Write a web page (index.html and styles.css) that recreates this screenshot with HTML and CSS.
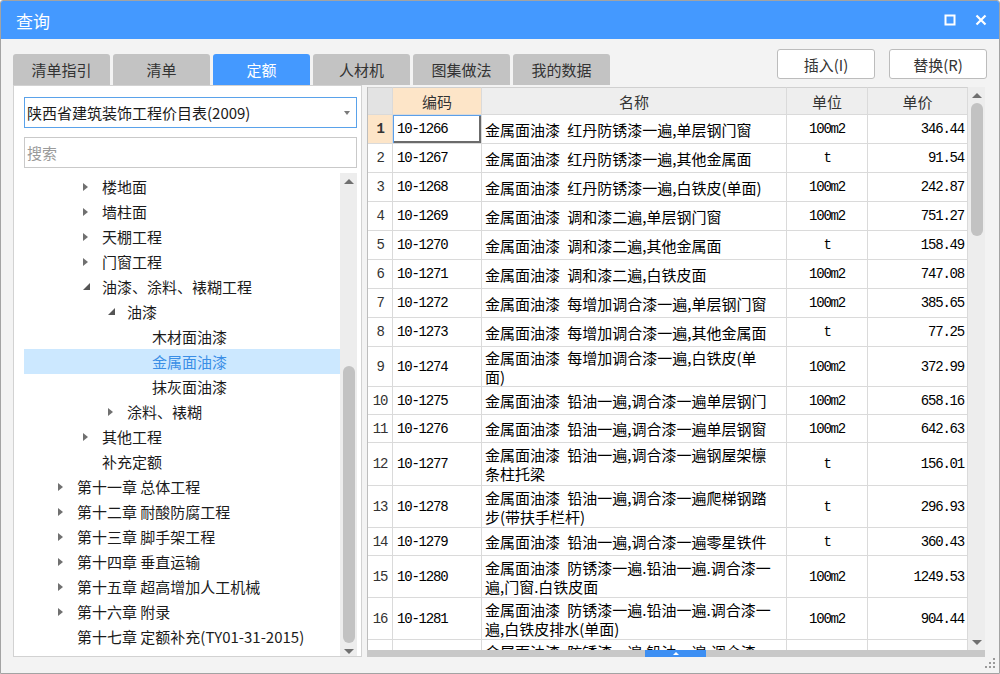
FILE: index.html
```html
<!DOCTYPE html>
<html lang="zh-CN">
<head>
<meta charset="utf-8">
<title>查询</title>
<link rel="stylesheet" href="styles.css">
</head>
<body>
<div class="window">
  <div class="titlebar">
    <span class="title">查询</span>
    <div class="wctrls">
      <svg width="12" height="12" viewBox="0 0 12 12"><rect x="1.5" y="1.5" width="9" height="9" fill="none" stroke="#fff" stroke-width="2"/></svg>
      <svg width="12" height="12" viewBox="0 0 12 12"><path d="M1.5 1.5 L10.5 10.5 M10.5 1.5 L1.5 10.5" stroke="#fff" stroke-width="2.2" fill="none"/></svg>
    </div>
  </div>

  <div class="toolbar">
    <div class="tabs">
      <div class="tab">清单指引</div>
      <div class="tab">清单</div>
      <div class="tab active">定额</div>
      <div class="tab">人材机</div>
      <div class="tab">图集做法</div>
      <div class="tab">我的数据</div>
    </div>
    <div class="btns">
      <div class="btn">插入(I)</div>
      <div class="btn">替换(R)</div>
    </div>
  </div>

  <div class="main">
    <div class="left">
      <div class="combo"><span>陕西省建筑装饰工程价目表(2009)</span><span class="dd"></span></div>
      <div class="search">搜索</div>
      <div class="tree">
        <div class="tree-list">
          <div class="row"><span class="ind2"></span><span class="tw"><i class="ac"></i></span>楼地面</div>
          <div class="row"><span class="ind2"></span><span class="tw"><i class="ac"></i></span>墙柱面</div>
          <div class="row"><span class="ind2"></span><span class="tw"><i class="ac"></i></span>天棚工程</div>
          <div class="row"><span class="ind2"></span><span class="tw"><i class="ac"></i></span>门窗工程</div>
          <div class="row"><span class="ind2"></span><span class="tw"><i class="ae"></i></span>油漆、涂料、裱糊工程</div>
          <div class="row"><span class="ind3"></span><span class="tw"><i class="ae"></i></span>油漆</div>
          <div class="row"><span class="ind4"></span><span class="tw"></span>木材面油漆</div>
          <div class="row sel"><span class="ind4"></span><span class="tw"></span>金属面油漆</div>
          <div class="row"><span class="ind4"></span><span class="tw"></span>抹灰面油漆</div>
          <div class="row"><span class="ind3"></span><span class="tw"><i class="ac"></i></span>涂料、裱糊</div>
          <div class="row"><span class="ind2"></span><span class="tw"><i class="ac"></i></span>其他工程</div>
          <div class="row"><span class="ind2"></span><span class="tw"></span>补充定额</div>
          <div class="row"><span class="ind1"></span><span class="tw"><i class="ac"></i></span>第十一章 总体工程</div>
          <div class="row"><span class="ind1"></span><span class="tw"><i class="ac"></i></span>第十二章 耐酸防腐工程</div>
          <div class="row"><span class="ind1"></span><span class="tw"><i class="ac"></i></span>第十三章 脚手架工程</div>
          <div class="row"><span class="ind1"></span><span class="tw"><i class="ac"></i></span>第十四章 垂直运输</div>
          <div class="row"><span class="ind1"></span><span class="tw"><i class="ac"></i></span>第十五章 超高增加人工机械</div>
          <div class="row"><span class="ind1"></span><span class="tw"><i class="ac"></i></span>第十六章 附录</div>
          <div class="row"><span class="ind1"></span><span class="tw"></span>第十七章 定额补充(TY01-31-2015)</div>
        </div>
        <div class="vscroll">
          <div class="sarrow"><i class="up"></i></div>
          <div class="thumb tthumb"></div>
          <div class="sfill"></div>
          <div class="sarrow"><i class="down"></i></div>
        </div>
      </div>
    </div>

    <div class="right">
      <div class="gridwrap">
        <div class="grid">
          <div class="gh">
            <div class="c cn"></div>
            <div class="c cc">编码</div>
            <div class="c cm">名称</div>
            <div class="c cu">单位</div>
            <div class="c cp">单价</div>
          </div>

          <div class="gr h29"><div class="c cn cur mono">1</div><div class="c cc mono focus">10-1266</div><div class="c cm">金属面油漆 红丹防锈漆一遍,单层钢门窗</div><div class="c cu mono">100m2</div><div class="c cp mono">346.44</div></div>
          <div class="gr h29"><div class="c cn mono">2</div><div class="c cc mono">10-1267</div><div class="c cm">金属面油漆 红丹防锈漆一遍,其他金属面</div><div class="c cu mono">t</div><div class="c cp mono">91.54</div></div>
          <div class="gr h29"><div class="c cn mono">3</div><div class="c cc mono">10-1268</div><div class="c cm">金属面油漆 红丹防锈漆一遍,白铁皮(单面)</div><div class="c cu mono">100m2</div><div class="c cp mono">242.87</div></div>
          <div class="gr h29"><div class="c cn mono">4</div><div class="c cc mono">10-1269</div><div class="c cm">金属面油漆 调和漆二遍,单层钢门窗</div><div class="c cu mono">100m2</div><div class="c cp mono">751.27</div></div>
          <div class="gr h29"><div class="c cn mono">5</div><div class="c cc mono">10-1270</div><div class="c cm">金属面油漆 调和漆二遍,其他金属面</div><div class="c cu mono">t</div><div class="c cp mono">158.49</div></div>
          <div class="gr h29"><div class="c cn mono">6</div><div class="c cc mono">10-1271</div><div class="c cm">金属面油漆 调和漆二遍,白铁皮面</div><div class="c cu mono">100m2</div><div class="c cp mono">747.08</div></div>
          <div class="gr h29"><div class="c cn mono">7</div><div class="c cc mono">10-1272</div><div class="c cm">金属面油漆 每增加调合漆一遍,单层钢门窗</div><div class="c cu mono">100m2</div><div class="c cp mono">385.65</div></div>
          <div class="gr h29"><div class="c cn mono">8</div><div class="c cc mono">10-1273</div><div class="c cm">金属面油漆 每增加调合漆一遍,其他金属面</div><div class="c cu mono">t</div><div class="c cp mono">77.25</div></div>
          <div class="gr h40"><div class="c cn mono">9</div><div class="c cc mono">10-1274</div><div class="c cm">金属面油漆 每增加调合漆一遍,白铁皮(单<br>面)</div><div class="c cu mono">100m2</div><div class="c cp mono">372.99</div></div>
          <div class="gr h28"><div class="c cn mono">10</div><div class="c cc mono">10-1275</div><div class="c cm">金属面油漆 铅油一遍,调合漆一遍单层钢门</div><div class="c cu mono">100m2</div><div class="c cp mono">658.16</div></div>
          <div class="gr h28"><div class="c cn mono">11</div><div class="c cc mono">10-1276</div><div class="c cm">金属面油漆 铅油一遍,调合漆一遍单层钢窗</div><div class="c cu mono">100m2</div><div class="c cp mono">642.63</div></div>
          <div class="gr h43"><div class="c cn mono">12</div><div class="c cc mono">10-1277</div><div class="c cm">金属面油漆 铅油一遍,调合漆一遍钢屋架檩<br>条柱托梁</div><div class="c cu mono">t</div><div class="c cp mono">156.01</div></div>
          <div class="gr h42"><div class="c cn mono">13</div><div class="c cc mono">10-1278</div><div class="c cm">金属面油漆 铅油一遍,调合漆一遍爬梯钢踏<br>步(带扶手栏杆)</div><div class="c cu mono">t</div><div class="c cp mono">296.93</div></div>
          <div class="gr h28"><div class="c cn mono">14</div><div class="c cc mono">10-1279</div><div class="c cm">金属面油漆 铅油一遍,调合漆一遍零星铁件</div><div class="c cu mono">t</div><div class="c cp mono">360.43</div></div>
          <div class="gr h42"><div class="c cn mono">15</div><div class="c cc mono">10-1280</div><div class="c cm">金属面油漆 防锈漆一遍.铅油一遍.调合漆一<br>遍,门窗.白铁皮面</div><div class="c cu mono">100m2</div><div class="c cp mono">1249.53</div></div>
          <div class="gr h42"><div class="c cn mono">16</div><div class="c cc mono">10-1281</div><div class="c cm">金属面油漆 防锈漆一遍.铅油一遍.调合漆一<br>遍,白铁皮排水(单面)</div><div class="c cu mono">100m2</div><div class="c cp mono">904.44</div></div>
          <div class="gr h42"><div class="c cn mono"></div><div class="c cc mono"></div><div class="c cm">金属面油漆 防锈漆一遍.铅油一遍.调合漆<br>&nbsp;</div><div class="c cu mono"></div><div class="c cp mono"></div></div>
        </div>
        <div class="vscroll vs2">
          <div class="sarrow"><i class="up"></i></div>
          <div class="thumb gthumb"></div>
          <div class="sfill"></div>
          <div class="sarrow"><i class="down"></i></div>
        </div>
      </div>
      <div class="hbar"><div class="hthumb"><i class="hup"></i></div></div>
    </div>
  </div>

  <div class="footer">
    <svg width="10" height="10" viewBox="0 0 10 10" fill="#9a9a9a">
      <rect x="8" y="0" width="2" height="2"/>
      <rect x="4" y="4" width="2" height="2"/><rect x="8" y="4" width="2" height="2"/>
      <rect x="0" y="8" width="2" height="2"/><rect x="4" y="8" width="2" height="2"/><rect x="8" y="8" width="2" height="2"/>
    </svg>
  </div>
</div>
</body>
</html>
```

FILE: styles.css
```css
* { box-sizing: border-box; }
html, body { margin: 0; padding: 0; }
body {
  font-family: "Noto Sans CJK SC", "Noto Sans", sans-serif;
  background: #ffffff;
}

.window {
  width: 1000px;
  height: 674px;
  border: 1px solid #a3a3a3;
  border-radius: 3px 3px 0 0;
  background: #f3f3f3;
  display: flex;
  flex-direction: column;
  overflow: hidden;
}

/* title bar */
.titlebar {
  flex: 0 0 38px;
  background: #4499ff;
  display: flex;
  align-items: center;
  justify-content: space-between;
  padding: 0 12px 0 15px;
  color: #fff;
}
.title { font-size: 17px; line-height: 1; }
.wctrls { display: flex; align-items: center; gap: 19px; }
.wctrls svg { display: block; }

/* toolbar: tabs + buttons */
.toolbar {
  flex: 0 0 46px;
  display: flex;
  justify-content: space-between;
  padding: 0 12px;
}
.tabs { display: flex; gap: 3px; align-self: flex-end; }
.tab {
  width: 97px;
  height: 31px;
  background: #c3c3c3;
  border-radius: 3px 3px 0 0;
  display: flex;
  align-items: center;
  justify-content: center;
  font-size: 15px;
  color: #333;
}
.tab.active { background: #4499ff; color: #fff; }
.btns { display: flex; gap: 14px; padding-top: 10px; }
.btn {
  width: 98px;
  height: 30px;
  background: #fff;
  border: 1px solid #bcbcbc;
  border-radius: 3px;
  font-size: 15px;
  color: #333;
  display: flex;
  align-items: center;
  justify-content: center;
}

/* main */
.main {
  flex: 0 0 572px;
  min-height: 0;
  overflow: hidden;
  display: flex;
  gap: 5px;
  padding-left: 12px;
}

.left {
  width: 349px;
  height: 572px;
  background: #fff;
  border: 1px solid #d2d2d2;
  padding: 11px 4px 0 10px;
  display: flex;
  flex-direction: column;
  overflow: hidden;
}
.combo {
  flex: 0 0 31px;
  border: 1px solid #5aa2ea;
  display: flex;
  align-items: center;
  justify-content: space-between;
  padding: 0 6px 0 2px;
  font-size: 15px;
  color: #1a1a1a;
}
.dd {
  width: 0; height: 0;
  border-top: 4px solid #7a7a7a;
  border-left: 3.5px solid transparent;
  border-right: 3.5px solid transparent;
}
.search {
  flex: 0 0 31px;
  margin-top: 9px;
  border: 1px solid #c9c9c9;
  display: flex;
  align-items: center;
  padding-left: 2px;
  font-size: 15px;
  color: #9a9a9a;
}
.tree {
  flex: 1;
  margin-top: 5px;
  display: flex;
  min-height: 0;
}
.tree-list {
  flex: 1;
  padding-top: 1px;
  overflow: hidden;
}
.row {
  height: 25px;
  display: flex;
  align-items: center;
  font-size: 15px;
  line-height: 25px;
  color: #1b1b1b;
  white-space: nowrap;
}
.row.sel { background: #cce8ff; color: #3a8ee6; }
.ind1 { flex: none; width: 28px; }
.ind2 { flex: none; width: 53px; }
.ind3 { flex: none; width: 78px; }
.ind4 { flex: none; width: 103px; }
.tw {
  flex: none;
  width: 25px;
  display: flex;
  align-items: center;
  padding-left: 6px;
}
.ac {
  display: block;
  width: 0; height: 0;
  border-left: 5px solid #707070;
  border-top: 4.5px solid transparent;
  border-bottom: 4.5px solid transparent;
}
.ae {
  display: block;
  width: 0; height: 0;
  border-bottom: 7px solid #555;
  border-left: 7px solid transparent;
}

/* scrollbars */
.vscroll {
  flex: none;
  width: 17px;
  background: #ededed;
  display: flex;
  flex-direction: column;
  align-items: center;
}
.sarrow {
  flex: 0 0 16px;
  width: 17px;
  display: flex;
  align-items: center;
  justify-content: center;
}
.up {
  display: block; width: 0; height: 0;
  border-bottom: 5px solid #707070;
  border-left: 5px solid transparent;
  border-right: 5px solid transparent;
}
.down {
  display: block; width: 0; height: 0;
  border-top: 5px solid #707070;
  border-left: 5px solid transparent;
  border-right: 5px solid transparent;
}
.thumb {
  flex: none;
  width: 12px;
  background: #c2c2c2;
  border-radius: 6px;
}
.tthumb { margin-top: 177px; height: 277px; }
.gthumb { height: 133px; }
.sfill { flex: 1; }

/* grid */
.right {
  width: 618px;
  height: 572px;
  display: flex;
  flex-direction: column;
  padding-top: 2px;
  overflow: hidden;
}
.gridwrap {
  flex: 1;
  display: flex;
  overflow: hidden;
  min-height: 0;
}
.grid {
  width: 601px;
  background: #fff;
  border-left: 1px solid #bdbdbd;
  overflow: hidden;
}
.gh, .gr { display: flex; }
.gh { height: 28px; }
.gh .c {
  border-top: 1px solid #d0d0d0;
  background: #eeeeee;
  font-size: 15px;
  color: #333;
  justify-content: center;
  padding: 0;
}
.gh .cn { background: #e3e3e3; }
.gh .cc { background: #fde5c8; }

.h28 { height: 28px; }
.h29 { height: 29px; }
.h40 { height: 40px; }
.h42 { height: 42px; }
.h43 { height: 43px; }

.c {
  flex: none;
  display: flex;
  align-items: center;
  border-right: 1px solid #dadada;
  border-bottom: 1px solid #dadada;
  color: #000;
  white-space: nowrap;
  overflow: hidden;
}
.cn { width: 25px; justify-content: center; color: #333; }
.cc { width: 89px; padding-left: 4px; }
.cm {
  width: 305px;
  padding-left: 3px;
  font-size: 15px;
  line-height: 19px;
  word-spacing: 4px;
}
.cu { width: 81px; justify-content: center; }
.cp { width: 100px; justify-content: flex-end; padding-right: 3px; }

.mono {
  font-family: "Liberation Mono", monospace;
  font-size: 14px;
  letter-spacing: -1.2px;
}
.cn.cur { background: #fde5c8; font-weight: bold; }
.focus {
  box-shadow: inset 1px 1px 0 #5b9fe9, inset -2px -2px 0 #6b6b6b;
}

.hbar {
  flex: 0 0 7px;
  background: #c8c8c8;
  display: flex;
}
.hthumb {
  margin-left: 278px;
  width: 61px;
  background: #3d8ff3;
  display: flex;
  align-items: center;
  justify-content: center;
}
.hup {
  display: block; width: 0; height: 0;
  border-bottom: 3px solid #fff;
  border-left: 3px solid transparent;
  border-right: 3px solid transparent;
}

.footer {
  flex: 1;
  display: flex;
  justify-content: flex-end;
  align-items: flex-end;
  padding: 0 4px 5px 0;
}
.footer svg { display: block; }
```
